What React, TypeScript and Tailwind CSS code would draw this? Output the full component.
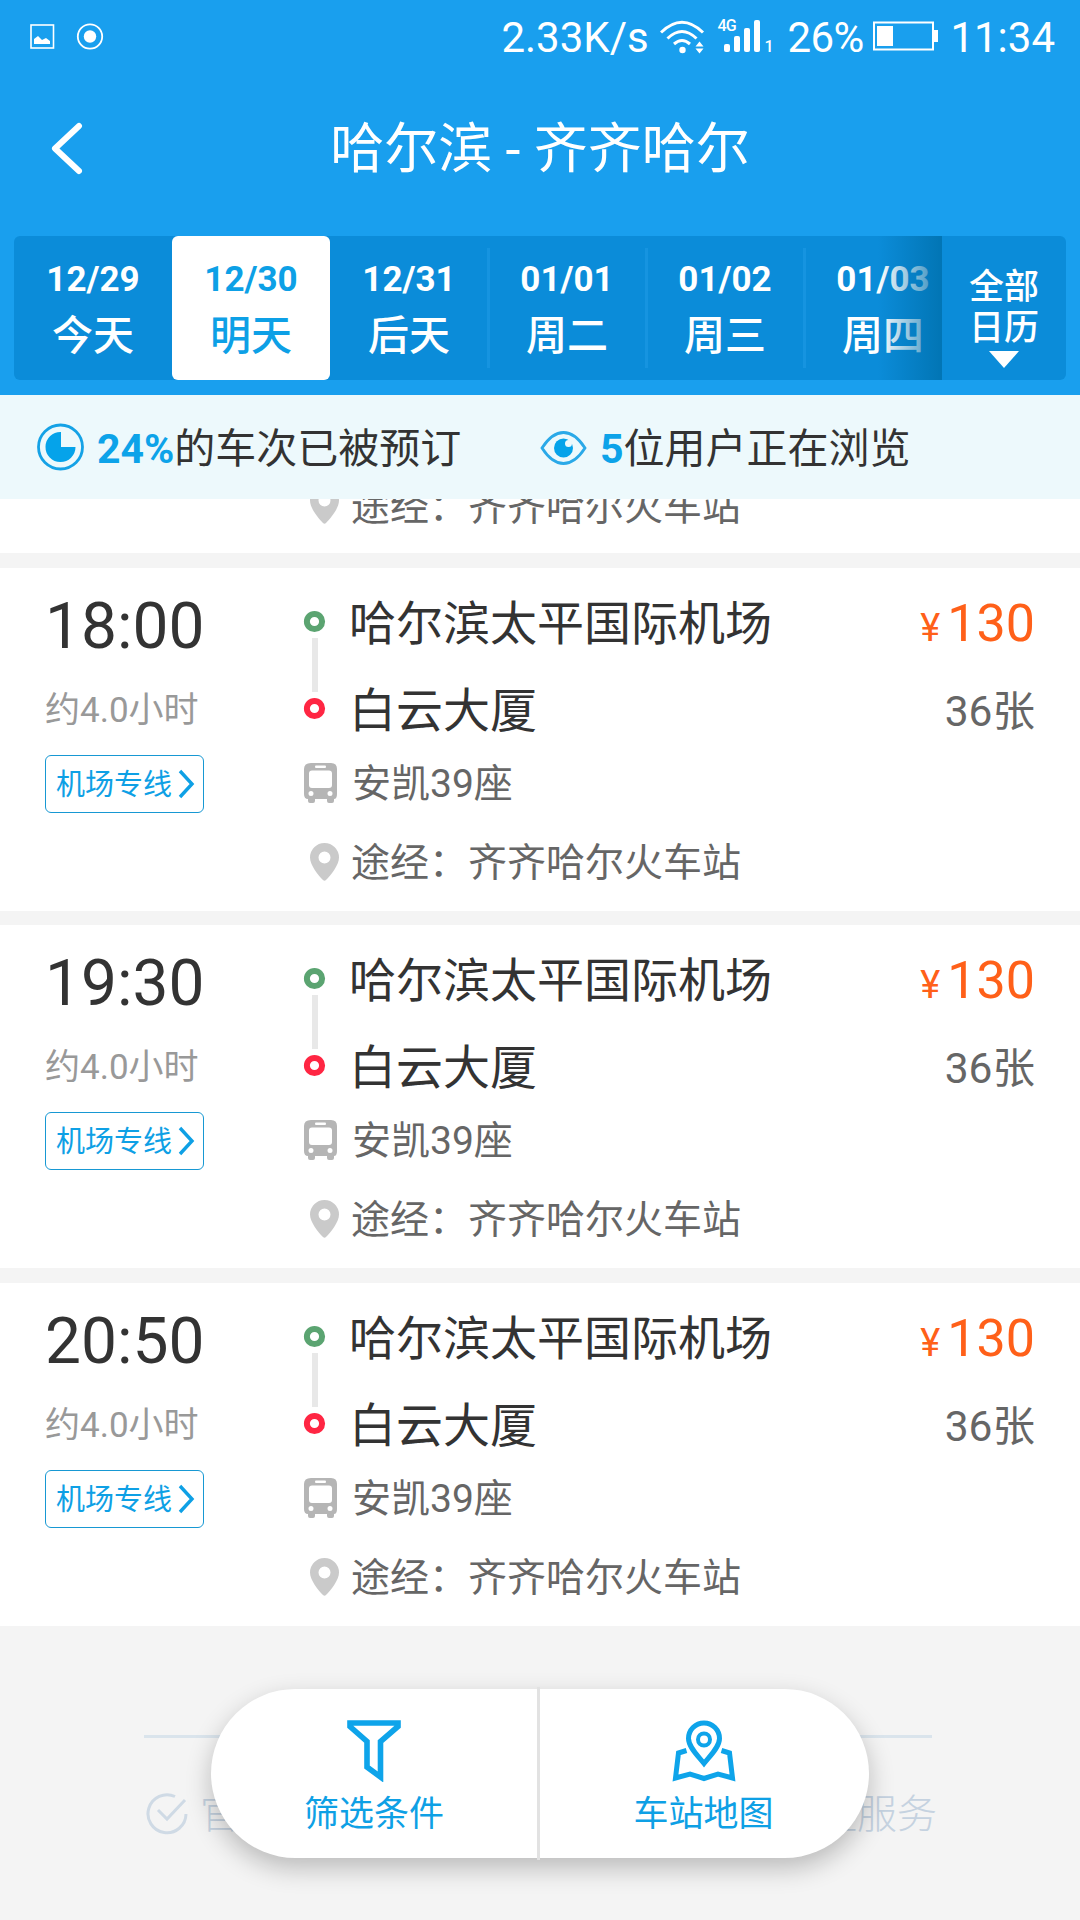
import clsx from "clsx";

const days = [
  { date: "12/29", label: "今天" },
  { date: "12/30", label: "明天", active: true },
  { date: "12/31", label: "后天", line: true },
  { date: "01/01", label: "周二", line: true },
  { date: "01/02", label: "周三", line: true },
  { date: "01/03", label: "周四" },
];

const trips = [{ time: "18:00" }, { time: "19:30" }, { time: "20:50" }];

function StatusBar() {
  return (
    <div className="flex h-[74px] items-center pl-[30px] pr-[25px] text-[42px] leading-[74px] text-white">
      <svg className="h-[26px] w-[26px]" viewBox="0 0 26 26" fill="none">
        <rect x="1" y="1" width="22.5" height="23" stroke="#fff" strokeWidth="1.6" />
        <path d="M4 20v-5l4-3 4 4 2-1 2-1 4 3v3z" fill="#fff" />
      </svg>
      <svg className="ml-[20px] h-[28px] w-[28px]" viewBox="0 0 28 28" fill="none">
        <circle cx="14" cy="13.5" r="12.2" stroke="#fff" strokeWidth="1.8" />
        <circle cx="14" cy="13.5" r="6.2" fill="#fff" />
      </svg>
      <span className="ml-auto w-[160px] pl-px pt-px">2.33K/s</span>
      {/* wifi */}
      <svg className="-mt-[1px] h-[34px] w-[46px]" viewBox="0 0 46 34" fill="none" stroke="#fff" strokeWidth="3">
        <path d="M1 12.500Q22 -8 43 12.500M7.500 18.500Q22 4.500 36.500 18.500M14 24Q22 17 30 24" />
        <circle cx="22.500" cy="30" r="3.200" fill="#fff" stroke="none" />
        <path d="M39.500 21.500l4 5h-8zM39.500 33.500l4-5h-8z" fill="#fff" stroke="none" />
      </svg>
      {/* signal */}
      <div className="ml-[11px] -mt-[2px] flex h-[32px] w-[70px]">
        <span className="h-[14px] w-[7px] shrink-0 text-[16px] font-medium leading-[12px] tracking-tighter">4G</span>
        <div className="flex h-[32px] items-end gap-[4px]">
          <i className="h-[8px] w-[6px] shrink-0 rounded-[2px] bg-white" />
          <i className="h-[16px] w-[6px] shrink-0 rounded-[2px] bg-white" />
          <i className="h-[24px] w-[6px] shrink-0 rounded-[2px] bg-white" />
          <i className="h-[32px] w-[6px] shrink-0 rounded-[2px] bg-white" />
          <span className="h-[14px] text-[16px] font-medium leading-[17px]">1</span>
        </div>
      </div>
      <span className="w-[86px] whitespace-nowrap pt-px tracking-[-0.5px]">26%</span>
      {/* battery */}
      <svg className="-mt-[3px] h-[30px] w-[66px]" viewBox="0 0 66 30" fill="none">
        <rect x="1" y="1.500" width="59" height="27" stroke="#fff" strokeWidth="2" />
        <rect x="4" y="5" width="16" height="20" fill="#fff" />
        <rect x="61" y="9" width="4" height="12" fill="#fff" />
      </svg>
      <span className="ml-[11px] pt-px">11:34</span>
    </div>
  );
}

function Header() {
  return (
    <div className="flex h-[162px] items-center px-[48px] pb-[14px]">
      <svg className="-mt-[1px] h-[54px] w-[36px]" viewBox="0 0 36 54" fill="none">
        <path d="M31 5L7 27.500L31 50" stroke="#fff" strokeWidth="6" strokeLinecap="round" strokeLinejoin="round" />
      </svg>
      <h1 className="flex-1 pr-[36px] pt-[4px] text-center text-[54px] leading-[148px] text-white">哈尔滨 - 齐齐哈尔</h1>
    </div>
  );
}

function DateTabs() {
  return (
    <div className="mx-[14px] flex h-[144px] overflow-hidden rounded-[6px] bg-[#0b8cd9] text-white">
      <div className="relative flex w-[928px] overflow-hidden">
        {days.map((d) => (
          <div
            key={d.date}
            className={clsx(
              "flex w-[158px] shrink-0 items-center",
              d.active && "rounded-[6px] bg-white text-[#0da0e6]"
            )}
          >
            <div className="flex-1 pt-[8px] text-center">
              <div className="text-[35px] font-bold leading-[40px]">{d.date}</div>
              <div className="mt-[8px] text-[41px] font-medium leading-[56px]">{d.label}</div>
            </div>
            {d.line && <div className="-ml-px -mr-[2px] h-[120px] w-[3px] bg-[#1694e0]" />}
          </div>
        ))}
        <div className="absolute right-0 top-0 h-full w-[64px] bg-linear-to-r from-[#0b8cd9]/0 to-[#0071ae]/85" />
      </div>
      {/* 全部日历 */}
      <div className="flex flex-1 flex-col items-center pt-[31px] text-[35px] font-medium leading-[41px]">
        <span>全部</span>
        <span>日历</span>
        <svg className="mt-[2px] h-[17px] w-[30px]" viewBox="0 0 30 17">
          <path d="M0 0h30L15 17z" fill="#fff" />
        </svg>
      </div>
    </div>
  );
}

function InfoBar() {
  return (
    <div className="flex h-[104px] items-center bg-[#edf9fc] pl-[37px] text-[41px] text-[#333]">
      <svg className="h-[48px] w-[48px]" viewBox="0 0 48 48" fill="none">
        <circle cx="23.500" cy="24" r="22" stroke="#15a2e6" strokeWidth="2.800" />
        <path d="M24 9v15h14.500A15 15 0 1 1 24 9z" fill="#05a3ea" />
      </svg>
      <div className="w-[455px] pl-[12px] pt-[5px]">
        <b className="text-[#0da3e9]">24%</b>的车次已被预订
      </div>
      <svg className="mt-[2px] h-[36px] w-[47px]" viewBox="0 0 47 36" fill="none">
        <path d="M2 18Q12 2.500 23.500 2.500T45 18Q35 33.500 23.500 33.500T2 18z" stroke="#2aa9e8" strokeWidth="2.800" />
        <circle cx="23.500" cy="18" r="9.500" fill="#05a3ea" />
        <circle cx="28.500" cy="13.500" r="3.500" fill="#edf9fc" />
      </svg>
      <div className="pl-[13px] pt-[5px]">
        <b className="text-[#0da3e9]">5</b>位用户正在浏览
      </div>
    </div>
  );
}

function ViaRow() {
  return (
    <div className="flex h-[64px] items-center text-[39px] text-[#666]">
      <svg className="-mt-px ml-[7px] mr-[11px] h-[38px] w-[31px]" viewBox="0 0 31 38">
        <path
          fillRule="evenodd"
          d="M15.500 0A14.500 14.500 0 0 1 30 14.500C30 22 22 32 17 37Q15.500 38.500 14 37C9 32 1 22 1 14.500A14.500 14.500 0 0 1 15.500 0zM15.500 8.500a6 6 0 1 0 0 12a6 6 0 1 0 0-12z"
          fill="#cacaca"
        />
      </svg>
      <span className="pt-[2px]">途经：齐齐哈尔火车站</span>
    </div>
  );
}

function TripCard({ time }: { time: string }) {
  return (
    <div className="flex h-[343px] bg-white pl-[45px] pr-[45px]">
      {/* 发车时间 */}
      <div className="w-[257px]">
        <div className="mt-[21px] text-[64px] leading-[76px] text-[#333]">{time}</div>
        <div className="mt-[25px] text-[35px] leading-[42px] text-[#999]">约4.0小时</div>
        <div className="mt-[23px] flex h-[58px] w-[159px] items-center rounded-[6px] border border-[#1798d3] pl-[10px] text-[29px] text-[#0ea0e5]">
          <span className="pt-[3px]">机场专线</span>
          <svg className="ml-[5px] h-[30px] w-[18px]" viewBox="0 0 18 30" fill="none">
            <path d="M3 2L15 15L3 28" stroke="#0ea0e5" strokeWidth="3.400" />
          </svg>
        </div>
      </div>
      {/* 站点 */}
      <div className="flex-1">
        <div className="flex pt-[11px]">
          <svg className="mr-[23px] h-[174px] w-[24px]" viewBox="0 0 24 174" fill="none">
            <circle cx="12.500" cy="42.500" r="7.600" stroke="#5ba471" strokeWidth="6" />
            <path d="M13 59v54" stroke="#e8e8e8" strokeWidth="6" />
            <circle cx="12.500" cy="129.500" r="7.600" stroke="#ff2643" strokeWidth="6" />
          </svg>
          <div className="mt-[1px] h-[173px] text-[47px] leading-[87px] text-[#333]">
            <div>哈尔滨太平国际机场</div>
            <div>白云大厦</div>
          </div>
        </div>
        <div className="flex h-[62px] items-center text-[39px] text-[#666]">
          <svg className="mb-[2px] ml-[2px] mr-[14px] h-[40px] w-[34px]" viewBox="0 0 34 40">
            <path
              fillRule="evenodd"
              d="M7 0h20q6 0 6 6v25q0 5-3 5v2q0 2-2 2h-3q-2 0-2-2v-2H11v2q0 2-2 2H6q-2 0-2-2v-2q-4 0-4-5V6q0-6 7-6zM12 2.500q-1 0-1 1.200t1 1.200h9q1 0 1-1.200t-1-1.200zM8 7.500q-3 0-3 3V22q0 3 3 3h17q3 0 3-3V10.500q0-3-3-3zM7 28a2.500 2.500 0 1 0 0 5a2.500 2.500 0 1 0 0-5zM26 28a2.500 2.500 0 1 0 0 5a2.500 2.500 0 1 0 0-5z"
              fill="#b5b5b5"
            />
          </svg>
          安凯39座
        </div>
        <div className="mt-[15px]">
          <ViaRow />
        </div>
      </div>
      {/* 价格 */}
      <div className="text-right">
        <div className="mt-[14px] flex items-baseline justify-end leading-[84px] text-[#ff6019]">
          <span className="mr-[7px] text-[38px]">¥</span>
          <span className="text-[52px]">130</span>
        </div>
        <div className="text-[42.5px] leading-[83px] text-[#666]">36张</div>
      </div>
    </div>
  );
}

function BottomMenu() {
  return (
    <div className="absolute left-[211px] top-[1689px] flex h-[169px] w-[658px] rounded-full bg-white text-[35px] leading-[44px] text-[#0ea0e5] shadow-[0_10px_26px_rgba(0,0,0,0.24)]">
      <div className="flex w-[326px] flex-col items-center pt-[31px]">
        <svg className="h-[62px] w-[54px]" viewBox="0 0 54 62" fill="none">
          <path d="M3 3H51V6.500L33.500 21.500V57L20 47V21.500L3 6.500z" stroke="#0ea4ea" strokeWidth="5.600" />
        </svg>
        <span className="mt-[11px]">筛选条件</span>
      </div>
      <div className="-mt-[2px] h-[173px] w-[3px] bg-[#e2e2e2]" />
      <div className="flex flex-1 flex-col items-center pr-[2px] pt-[31px]">
        <svg className="h-[62px] w-[64px]" viewBox="0 0 64 62" fill="none" stroke="#0ea4ea" strokeWidth="5">
          <path d="M32 43.500C26 36 16.500 27 16.500 18.500a15.500 15.500 0 0 1 31 0C47.500 27 38 36 32 43.500z" />
          <circle cx="32" cy="19.500" r="6" strokeWidth="4" />
          <path d="M14.500 30.500L6.500 33L3.500 58L18 54L32 58.500L46 54L60.500 58L57.500 33L49.500 30.500" />
        </svg>
        <span className="mt-[11px]">车站地图</span>
      </div>
    </div>
  );
}

export default function App() {
  return (
    <div className="relative h-[1920px] w-[1080px] overflow-hidden bg-[#f4f4f4] font-[Roboto,'Noto_Sans_CJK_SC',sans-serif]">
      <div className="h-[395px] bg-[#199fee]">
        <StatusBar />
        <Header />
        <DateTabs />
      </div>
      <InfoBar />
      {/* 列表 */}
      <div className="flex h-[54px] flex-col justify-end overflow-hidden bg-white pb-[17px] pl-[302px]">
        <ViaRow />
      </div>
      <div className="mt-[15px] flex flex-col gap-[14px]">
        {trips.map((t) => (
          <div key={t.time} className="last:mt-px">
            <TripCard time={t.time} />
          </div>
        ))}
      </div>
      {/* 底部说明 */}
      <div className="ml-[144px] mt-[109px] w-[793px]">
        <div className="h-[3px] w-[788px] bg-[#dae4ec]" />
        <div className="mt-[47px] flex items-center text-[40px] font-light leading-[60px] text-[#c5d2e0]">
          <svg className="-mt-[2px] ml-[2px] mr-[12px] h-[42px] w-[42px]" viewBox="0 0 42 42" fill="none" stroke="#cfdae5" strokeWidth="3">
            <path d="M29 3.500A19 19 0 1 0 40 21M12 17L21 26L39 7" />
          </svg>
          <span>官方</span>
          <span className="ml-auto">全程服务</span>
        </div>
      </div>
      <BottomMenu />
    </div>
  );
}
